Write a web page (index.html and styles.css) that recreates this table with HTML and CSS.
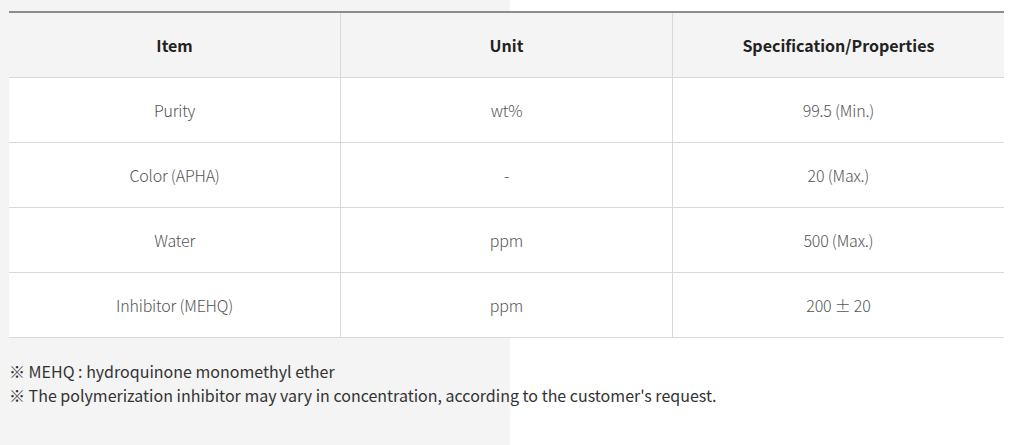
FILE: index.html
```html
<!DOCTYPE html>
<html lang="en">
<head>
<meta charset="utf-8">
<link rel="stylesheet" href="styles.css">
</head>
<body>
<div class="page">
  <table class="spec">
    <thead>
      <tr><th>Item</th><th>Unit</th><th>Specification/Properties</th></tr>
    </thead>
    <tbody>
      <tr><td>Purity</td><td>wt%</td><td>99.5 (Min.)</td></tr>
      <tr><td>Color (APHA)</td><td>-</td><td>20 (Max.)</td></tr>
      <tr><td>Water</td><td>ppm</td><td>500 (Max.)</td></tr>
      <tr><td>Inhibitor (MEHQ)</td><td>ppm</td><td>200 ± 20</td></tr>
    </tbody>
  </table>
  <ul class="notes">
    <li>※ MEHQ : hydroquinone monomethyl ether</li>
    <li>※ The polymerization inhibitor may vary in concentration, according to the customer's request.</li>
  </ul>
</div>
</body>
</html>
```
FILE: styles.css
```css
html, body {
  margin: 0;
  padding: 0;
}
body {
  width: 1024px;
  height: 445px;
  background: linear-gradient(to right, #f4f4f4 510px, #ffffff 510px);
  font-family: "Noto Sans CJK KR", "Noto Sans", sans-serif;
  overflow: hidden;
}
.page {
  padding: 11px 0 0 9px;
  width: 995px;
}
.spec {
  width: 995px;
  border-collapse: collapse;
  table-layout: fixed;
  border-top: 2px solid #8c8c8c;
}
.spec th,
.spec td {
  text-align: center;
  vertical-align: middle;
  font-size: 16px;
  border-bottom: 1px solid #d9d9d9;
  border-left: 1px solid #d9d9d9;
  padding: 0;
}
.spec th:first-child,
.spec td:first-child {
  border-left: none;
}
.spec th {
  height: 64px;
  background: #f4f4f4;
  color: #222222;
  font-weight: 700;
}
.spec td {
  height: 64px;
  background: #ffffff;
  color: #555555;
  font-weight: 300;
  letter-spacing: -0.2px;
}
.notes {
  list-style: none;
  margin: 21px 0 0;
  padding: 0;
  font-size: 16px;
  line-height: 24px;
  color: #333333;
}
```
